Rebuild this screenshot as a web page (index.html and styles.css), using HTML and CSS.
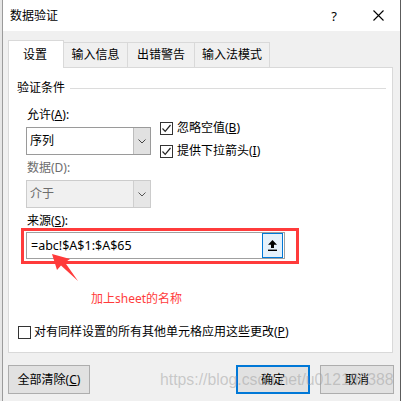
FILE: index.html
```html
<!DOCTYPE html>
<html>
<head>
<meta charset="utf-8">
<link rel="stylesheet" href="styles.css">
</head>
<body>
<div class="window">
  <div class="titlebar">
    <span class="title">数据验证</span>
    <span class="help">?</span>
    <span class="close"><svg width="11" height="11" viewBox="0 0 11 11"><path d="M0.5 0.5 L10.5 10.5 M10.5 0.5 L0.5 10.5" stroke="#000" stroke-width="1.1" fill="none"/></svg></span>
  </div>
  <div class="body">
    <div class="tabs">
      <div class="tab active">设置</div>
      <div class="tab t2">输入信息</div>
      <div class="tab t3">出错警告</div>
      <div class="tab t4">输入法模式</div>
    </div>
    <div class="panel">
      <div class="group-head"><span>验证条件</span><span class="rule"></span></div>
      <div class="content">
        <div class="top">
          <div class="left-col">
            <div class="label l-allow">允许(<u>A</u>):</div>
            <div class="select">
              <span class="val">序列</span>
              <span class="drop"><svg width="8" height="5" viewBox="0 0 8 5"><path d="M0.5 0.5 L4 4 L7.5 0.5" stroke="#444" stroke-width="1" fill="none"/></svg></span>
            </div>
            <div class="label l-data disabled-text">数据(D):</div>
            <div class="select disabled">
              <span class="val">介于</span>
              <span class="drop"><svg width="8" height="5" viewBox="0 0 8 5"><path d="M0.5 0.5 L4 4 L7.5 0.5" stroke="#555" stroke-width="1" fill="none"/></svg></span>
            </div>
          </div>
          <div class="checks">
            <div class="check"><span class="box"><svg width="11" height="11" viewBox="0 0 11 11"><path d="M1.5 5.5 L4.2 8.3 L9.5 2" stroke="#222" stroke-width="1.2" fill="none"/></svg></span>忽略空值(<u>B</u>)</div>
            <div class="check"><span class="box"><svg width="11" height="11" viewBox="0 0 11 11"><path d="M1.5 5.5 L4.2 8.3 L9.5 2" stroke="#222" stroke-width="1.2" fill="none"/></svg></span>提供下拉箭头(<u>I</u>)</div>
          </div>
        </div>
        <div class="label l-src">来源(<u>S</u>):</div>
        <div class="annot-box">
          <div class="input">
            <span class="val">=abc!$A$1:$A$65</span>
            <span class="pick"><svg width="11" height="12" viewBox="0 0 11 12"><polygon points="5.5,0 10,4.8 7,4.8 7,8 4,8 4,4.8 1,4.8" fill="#000"/><rect x="1" y="9.6" width="9" height="1.4" fill="#000"/></svg></span>
          </div>
        </div>
        <div class="note">加上sheet的名称</div>
      </div>
      <div class="apply"><span class="box"></span>对有同样设置的所有其他单元格应用这些更改(<u>P</u>)</div>
      <svg class="arrow" width="100" height="250" viewBox="8 67 100 250"><polygon points="52,254 70,259 65,262.5 78,281 61,265.5 57,270" fill="#ff3b3b"/></svg>
    </div>
    <div class="buttons">
      <button class="btn wide">全部清除(<u>C</u>)</button>
      <span class="spacer"></span>
      <button class="btn primary">确定</button>
      <button class="btn">取消</button>
    </div>
    <div class="watermark">https://blog.csdn.net/u012190388</div>
  </div>
</div>
</body>
</html>
```

FILE: styles.css
```css
* { box-sizing: border-box; }
html, body { margin: 0; padding: 0; }
body {
  width: 401px;
  height: 401px;
  overflow: hidden;
  background: #e6e6e6;
  font-family: "Noto Sans", "Noto Sans CJK SC", sans-serif;
  font-size: 12px;
  color: #000;
}
u { text-decoration: underline; text-underline-offset: 1px; }

.window {
  margin-left: 2px;
  width: 399px;
  height: 401px;
  border-left: 1px solid #9b9b9b;
  border-right: 1px solid #5c5c5c;
  display: flex;
  flex-direction: column;
  background: #f0f0f0;
}

.titlebar {
  height: 31px;
  flex: none;
  background: #fff;
  display: flex;
  align-items: center;
  padding-left: 7px;
}
.title { line-height: 16px; }
.help {
  margin-left: auto;
  width: 10px;
  text-align: center;
  font-size: 13px;
  line-height: 16px;
}
.close {
  margin-left: 34px;
  margin-right: 16px;
  width: 11px;
  height: 11px;
  display: flex;
}

.body {
  position: relative;
  flex: 1;
  padding: 9px 7px 0 5px;
}

.tabs {
  display: flex;
  align-items: flex-end;
  height: 27px;
  position: relative;
  z-index: 1;
}
.tab {
  height: 25px;
  border: 1px solid #d9d9d9;
  border-bottom: none;
  background: #f0f0f0;
  display: flex;
  align-items: center;
  justify-content: center;
  margin-left: -1px;
  line-height: 16px;
}
.tab.active {
  margin-left: 0;
  width: 56px;
  height: 28px;
  margin-bottom: -1px;
  background: #fff;
  position: relative;
  z-index: 2;
  padding-right: 2px;
}
.t2 { width: 65px; }
.t3 { width: 68px; }
.t4 { width: 76px; }

.panel {
  position: relative;
  height: 286px;
  background: #fff;
  border: 1px solid #d9d9d9;
  padding: 12px 6px 0 8px;
}

.group-head {
  display: flex;
  align-items: center;
  height: 16px;
  line-height: 16px;
}
.rule {
  flex: 1;
  height: 1px;
  background: #dcdcdc;
  margin-left: 5px;
}

.content { padding-left: 9px; }

.top { display: flex; align-items: flex-start; }
.left-col { display: flex; flex-direction: column; }

.label { line-height: 16px; padding-left: 1px; }
.l-allow { margin-top: 11px; }
.l-data { margin-top: 5px; }
.disabled-text { color: #6d6d6d; }

.select {
  margin-top: 4px;
  width: 125px;
  height: 28px;
  border: 1px solid #9a9a9a;
  background: #fff;
  display: flex;
  align-items: center;
}
.select .val {
  flex: 1;
  padding-left: 3px;
  line-height: 16px;
}
.select .drop {
  width: 17px;
  height: 100%;
  background: #e1e1e1;
  border-left: 1px solid #bdbdbd;
  display: flex;
  align-items: center;
  justify-content: center;
}
.select.disabled {
  border-color: #cccccc;
  background: #f0f0f0;
}
.select.disabled .val { color: #6d6d6d; }
.select.disabled .drop {
  background: #e6e6e6;
  border-left-color: #cfcfcf;
}

.checks {
  margin-left: 9px;
  padding-top: 24px;
  display: flex;
  flex-direction: column;
  gap: 7px;
}
.check {
  display: flex;
  align-items: center;
  line-height: 16px;
}
.box {
  width: 13px;
  height: 13px;
  border: 1px solid #333;
  background: #fff;
  margin-right: 4px;
  display: flex;
  align-items: center;
  justify-content: center;
  flex: none;
}

.l-src { margin-top: 6px; line-height: 14px; }

.annot-box {
  margin-left: -5px;
  width: 278px;
  height: 36px;
  border: 3px solid #ff3b3b;
  padding: 1px 11px 2px 2px;
}
.input {
  width: 259px;
  height: 27px;
  border: 1px solid #a0a0a0;
  background: #fff;
  display: flex;
  align-items: center;
}
.input .val {
  flex: 1;
  padding-left: 4px;
  font-size: 12.5px;
  line-height: 16px;
}
.pick {
  width: 21px;
  height: 25px;
  margin-right: 1px;
  border: 1px solid #0078d7;
  background: #e5f1fb;
  display: flex;
  align-items: center;
  justify-content: center;
}

.note {
  margin-top: 27px;
  margin-left: 65px;
  line-height: 16px;
  color: #ff3b3b;
}

.apply {
  margin-top: 17px;
  padding-left: 1px;
  display: flex;
  align-items: center;
  line-height: 16px;
}
.apply .box { margin-right: 3px; }

.arrow {
  position: absolute;
  left: -1px;
  top: -1px;
}

.buttons {
  margin-top: 12px;
  margin-right: -1px;
  display: flex;
  gap: 10px;
}
.spacer { flex: 1; }
.btn {
  height: 29px;
  width: 74px;
  border: 1px solid #adadad;
  background: #e1e1e1;
  font-family: inherit;
  font-size: 12px;
  color: #000;
  padding: 0;
  line-height: 16px;
}
.btn.wide { width: 82px; }
.btn.primary { border: 2px solid #0078d7; }

.watermark {
  position: absolute;
  left: 157px;
  top: 340px;
  font-family: "Liberation Sans", sans-serif;
  font-size: 15.8px;
  line-height: 18px;
  color: rgba(150, 150, 150, 0.45);
  white-space: nowrap;
  pointer-events: none;
}
```
